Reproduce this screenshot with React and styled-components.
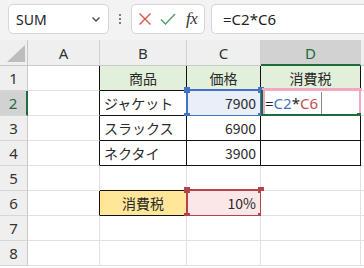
import React from "react";
import styled, { createGlobalStyle } from "styled-components";

const Global = createGlobalStyle`
  html, body { margin: 0; padding: 0; background: #ffffff; }
  body { width: 364px; height: 268px; overflow: hidden; font-family: "Noto Sans CJK JP", "Noto Sans", sans-serif; }
  * { box-sizing: border-box; }
`;

const Page = styled.div`
  width: 364px;
  height: 268px;
  display: flex;
  flex-direction: column;
  overflow: hidden;
`;

const Toolbar = styled.div`
  height: 40px;
  flex: none;
  display: flex;
  align-items: flex-start;
  padding: 4px 0 0 8px;
  gap: 6px;
  background: #f3f3f3;
`;

const Box = styled.div`
  height: 30px;
  background: #ffffff;
  border: 1px solid #d6d6d6;
  border-radius: 5px;
  display: flex;
  align-items: center;
`;

const NameBox = styled(Box)`
  width: 101px;
  padding: 0 6px 0 7px;
  justify-content: space-between;
  font-family: "Noto Sans", sans-serif;
  font-size: 14px;
  color: #222;
`;

const Dots = styled.div`
  width: 10px;
  height: 30px;
  display: flex;
  flex-direction: column;
  align-items: center;
  justify-content: center;
  gap: 2px;
  & > span { width: 2px; height: 2px; background: #555; border-radius: 1px; }
`;

const FuncBox = styled(Box)`
  width: 74px;
  padding: 0 4px 0 6px;
  gap: 8px;
`;

const Fx = styled.span`
  font-family: "Liberation Serif", serif;
  font-style: italic;
  font-size: 17px;
  color: #333;
  margin-left: 2px;
  letter-spacing: -0.5px;
`;

const FormulaBox = styled(Box)`
  flex: 1;
  border-right: none;
  border-radius: 5px 0 0 5px;
  padding-left: 11px;
  font-family: "Noto Sans", sans-serif;
  font-size: 15px;
  color: #222;
`;

const Grid = styled.div`
  display: grid;
  grid-template-columns: 28px 72px 87px 74px 100px 1fr;
  grid-template-rows: 26px repeat(8, 25px);
  flex: 1;
`;

const Corner = styled.div`
  background: #efefef;
  border-right: 1px solid #c8c8c8;
  border-bottom: 1px solid #c8c8c8;
  display: flex;
  align-items: flex-end;
  justify-content: flex-end;
  padding: 0 2px 3px 0;
`;

const ColHead = styled.div`
  background: ${(p) => (p.$active ? "#d2d2d2" : "#efefef")};
  color: ${(p) => (p.$active ? "#1e6b3e" : "#333")};
  border-right: 1px solid #d0d0d0;
  border-bottom: ${(p) => (p.$active ? "2px solid #1e6b3e" : "1px solid #c8c8c8")};
  display: flex;
  align-items: center;
  justify-content: center;
  font-family: "Noto Sans", sans-serif;
  font-size: 15px;
  padding-top: ${(p) => (p.$active ? "1px" : "0")};
`;

const RowHead = styled.div`
  background: ${(p) => (p.$active ? "#d2d2d2" : "#efefef")};
  color: ${(p) => (p.$active ? "#1e6b3e" : "#333")};
  border-right: ${(p) => (p.$active ? "2px solid #1e6b3e" : "1px solid #c8c8c8")};
  border-bottom: 1px solid #d6d6d6;
  display: flex;
  align-items: center;
  justify-content: center;
  font-family: "Noto Sans", sans-serif;
  font-size: 15px;
`;

const Cell = styled.div`
  position: relative;
  background: ${(p) => p.$bg || "#ffffff"};
  border-right: 1px solid ${(p) => p.$r || "#e1e1e1"};
  border-bottom: 1px solid ${(p) => p.$b || "#e1e1e1"};
  display: flex;
  align-items: center;
  justify-content: ${(p) => (p.$align === "right" ? "flex-end" : p.$align === "center" ? "center" : "flex-start")};
  padding: 0 4px;
  font-family: "Noto Sans CJK JP", sans-serif;
  font-size: 14px;
  color: #2a2a2a;
  white-space: nowrap;
`;

const Sel = styled.div`
  position: absolute;
  top: -2px;
  left: -1px;
  right: -2px;
  bottom: -2px;
  border: 2px solid ${(p) => p.$c};
  pointer-events: none;
`;

const Handle = styled.span`
  position: absolute;
  width: 6px;
  height: 6px;
  background: ${(p) => p.$c};
  ${(p) => (p.$t ? "top: -4px;" : "bottom: -4px;")}
  ${(p) => (p.$l ? "left: -4px;" : "right: -4px;")}
`;

const Edit = styled.div`
  position: absolute;
  top: -3px;
  left: 1px;
  right: -2px;
  bottom: -3px;
  border: 3px solid #f2a7c3;
  display: flex;
  align-items: center;
  padding-left: 0;
  font-family: "Noto Sans", sans-serif;
  font-size: 15px;
  color: #222;
  background: #fff;
`;

const ActiveEdge = styled.div`
  position: absolute;
  left: -3px;
  right: -1px;
  bottom: -1px;
  height: 2px;
  background: #1e6b3e;
  &::after {
    content: "";
    position: absolute;
    right: -1px;
    top: -1px;
    width: 4px;
    height: 4px;
    background: #1e6b3e;
  }
`;

const ActiveLeft = styled.div`
  position: absolute;
  left: -4px;
  top: -1px;
  bottom: -1px;
  width: 2px;
  background: #1e6b3e;
`;

const Ref = styled.span`
  color: ${(p) => p.$c};
`;

const Caret = styled.span`
  display: inline-block;
  width: 1px;
  height: 23px;
  background: #888;
  margin-left: 3px;
`;

const cols = ["A", "B", "C", "D"];

const K = "#111111";

function Handles({ c }) {
  return (
    <>
      <Handle $c={c} $t $l />
      <Handle $c={c} $t />
      <Handle $c={c} $l />
      <Handle $c={c} />
    </>
  );
}

function XIcon() {
  return (
    <svg width="14" height="14" viewBox="0 0 14 14">
      <path d="M1.5 1.5 L12.5 12.5 M12.5 1.5 L1.5 12.5" stroke="#d9534f" strokeWidth="1.4" fill="none" />
    </svg>
  );
}

function CheckIcon() {
  return (
    <svg width="16" height="14" viewBox="0 0 16 14">
      <path d="M1 7.5 L5.5 12 L15 2" stroke="#4fa06a" strokeWidth="1.4" fill="none" />
    </svg>
  );
}

export default function App() {
  const rows = [
    [
      { r: K },
      { text: "商品", bg: "#e2efda", align: "center", r: K, b: K },
      { text: "価格", bg: "#e2efda", align: "center", r: K, b: K },
      { text: "消費税", bg: "#e2efda", align: "center", r: K, b: K },
    ],
    [
      { r: K },
      { text: "ジャケット", r: K, b: K },
      { text: "7900", align: "right", r: K, b: K, bg: "#e9eef8", sel: "#4472c4" },
      { edit: true, r: K, b: K },
    ],
    [
      { r: K },
      { text: "スラックス", r: K, b: K },
      { text: "6900", align: "right", r: K, b: K },
      { r: K, b: K },
    ],
    [
      { r: K },
      { text: "ネクタイ", r: K, b: K },
      { text: "3900", align: "right", r: K, b: K },
      { r: K, b: K },
    ],
    [{}, { b: K }, {}, {}],
    [
      { r: K },
      { text: "消費税", bg: "#ffe699", align: "center", r: K, b: K },
      { text: "10%", align: "right", bg: "#fbe7e8", sel: "#b5434a" },
      {},
    ],
    [{}, {}, {}, {}],
    [{}, {}, {}, {}],
  ];

  return (
    <Page>
      <Global />
      <Toolbar>
        <NameBox>
          <span>SUM</span>
          <svg width="12" height="12" viewBox="0 0 12 12">
            <path d="M2.5 4.5 L6 8 L9.5 4.5" stroke="#444" strokeWidth="1.3" fill="none" />
          </svg>
        </NameBox>
        <Dots>
          <span />
          <span />
          <span />
        </Dots>
        <FuncBox>
          <XIcon />
          <CheckIcon />
          <Fx>fx</Fx>
        </FuncBox>
        <FormulaBox>=C2*C6</FormulaBox>
      </Toolbar>
      <Grid>
        <Corner>
          <svg width="18" height="17" viewBox="0 0 18 17">
            <polygon points="18,0 18,17 0,17" fill="#bdbdbd" />
          </svg>
        </Corner>
        {cols.map((c) => (
          <ColHead key={c} $active={c === "D"}>
            {c}
          </ColHead>
        ))}
        <ColHead />
        {rows.map((row, i) => (
          <React.Fragment key={i}>
            <RowHead $active={i === 1}>{i + 1}</RowHead>
            {row.map((cell, j) => (
              <Cell key={j} $bg={cell.bg} $r={cell.r} $b={cell.b} $align={cell.align}>
                {cell.text}
                {cell.sel && (
                  <Sel $c={cell.sel}>
                    <Handles c={cell.sel} />
                  </Sel>
                )}
                {cell.edit && (
                  <Edit>
                    <span>=</span>
                    <Ref $c="#4472c4">C2</Ref>
                    <span>*</span>
                    <Ref $c="#c0504d">C6</Ref>
                    <Caret />
                    <ActiveEdge />
                    <ActiveLeft />
                  </Edit>
                )}
              </Cell>
            ))}
            <Cell />
          </React.Fragment>
        ))}
      </Grid>
    </Page>
  );
}
